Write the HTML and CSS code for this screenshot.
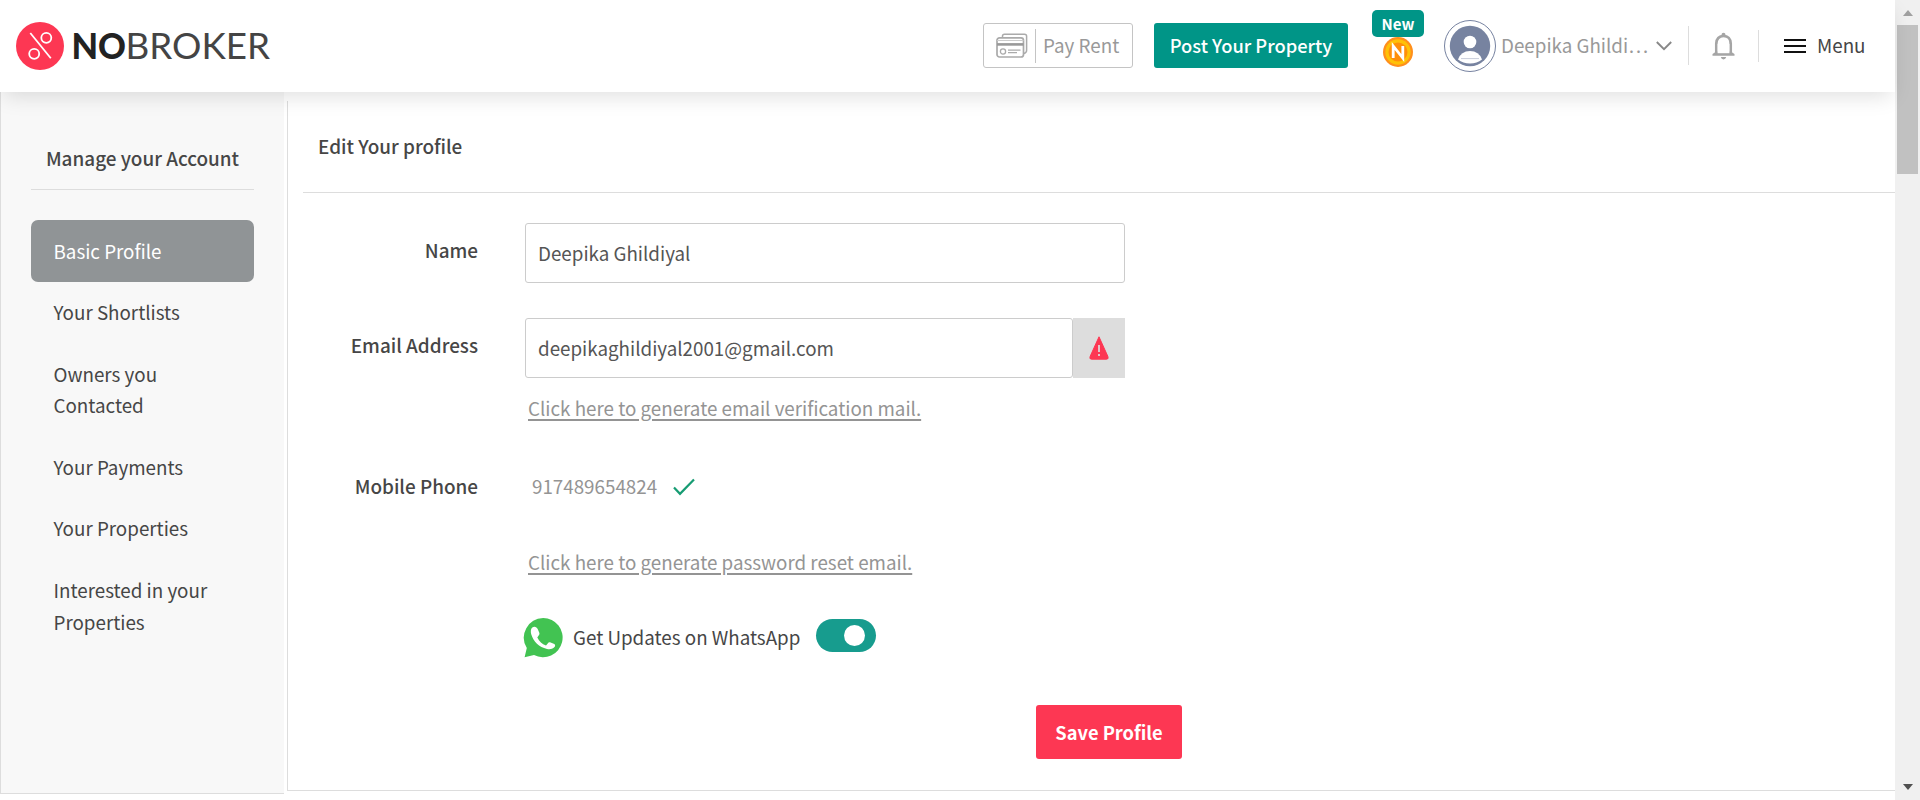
FILE: index.html
```html
<!DOCTYPE html>
<html lang="en">
<head>
<meta charset="utf-8">
<title>NoBroker - Edit Your profile</title>
<link rel="stylesheet" href="styles.css">
</head>
<body>
<div class="page">
  <div class="view">
    <header class="header">
      <a class="logo">
        <svg width="48" height="48" viewBox="0 0 48 48"><circle cx="24" cy="24" r="24" fill="#fd3753"/><g fill="none" stroke="#fff" stroke-width="1.8"><path d="M14.3 11 34.8 36.3"/><circle cx="30.3" cy="15.8" r="5"/><circle cx="18.2" cy="31.8" r="5"/></g></svg>
        <svg class="wordmark" width="200" height="48" viewBox="0 0 200 48"><text class="word-no" x="-.5" y="37.2" textLength="54.5" lengthAdjust="spacingAndGlyphs">NO</text><text class="word-broker" x="53.5" y="37.2" textLength="144.5" lengthAdjust="spacingAndGlyphs">BROKER</text></svg>
      </a>
      <div class="nav">
        <a class="pay">
          <svg width="32" height="26" viewBox="0 0 32 26" fill="none"><path d="M6.5 4V3Q6.500 1.200 8.500 1.200H28.500Q30.600 1.200 30.600 3.200V17.500Q30.600 19.800 27.800 20.500" stroke="#aaa" stroke-width="1.5"/><rect x="1" y="4.8" width="26.5" height="19.2" rx="2.5" stroke="#aaa" stroke-width="1.7"/><path d="M1 7.5h26.5" stroke="#ccc"/><path d="M1 11.4h26.5" stroke="#999" stroke-width="2.6"/><circle cx="7" cy="18.5" r="2.6" stroke="#aaa" stroke-width="1.3"/><path d="M12 17.2h12.5M12 19.7h9" stroke="#aaa" stroke-width="1.2"/></svg>
          <span class="pay-text">Pay Rent</span>
        </a>
        <a class="post">Post Your Property</a>
        <div class="new">
          <span class="new-tag">New</span>
          <svg width="30" height="30" viewBox="0 0 30 30"><circle cx="15" cy="15" r="15" fill="#ff8f1c"/><circle cx="15" cy="15" r="12.7" fill="#ffc107"/><circle cx="15" cy="15" r="9.5" fill="#ff8f0a"/><path d="M10.2 21V9L19.8 21V9" fill="none" stroke="#fff" stroke-width="2.8"/></svg>
        </div>
        <div class="user">
          <svg width="52" height="52" viewBox="0 0 52 52"><circle cx="26" cy="26" r="25.5" fill="#fff" stroke="#7682a0"/><circle cx="26" cy="26" r="20.2" fill="#7783a0"/><circle cx="26" cy="22" r="6.3" fill="#fff"/><path d="M14 39.5Q17 31 26 31T38 39.5Q33 43.600 26 43.600T14 39.500Z" fill="#fff"/><path d="M17 38.6h18" stroke="#c9cedb" stroke-width="1"/></svg>
          <span class="user-name">Deepika Ghildi…</span>
          <svg width="16" height="10" viewBox="0 0 16 10"><path d="M.8 1 8 8.2 15.2 1" fill="none" stroke="#888" stroke-width="1.9"/></svg>
        </div>
        <div class="bell">
          <svg width="24" height="28" viewBox="0 0 24 28"><path d="M4.3 21V11.5C4.3 6.8 7.2 4 11.500 4S18.700 6.800 18.700 11.500V21" fill="none" stroke="#a5a5a5" stroke-width="2.7"/><path d="M9.500 4V2.800a2 2 0 0 1 4 0V4ZM.500 23.800V22L4.300 19.500H18.700L22.500 22V23.800ZM8.800 25h5.400q-.5 2.400-2.700 2.400T8.800 25Z" fill="#a5a5a5"/><rect x="5.600" y="12" width="11.800" height="9.200" fill="#fff"/></svg>
        </div>
        <div class="menu"><span class="burger"></span><span class="menu-text">Menu</span></div>
      </div>
    </header>
    <main class="body">
      <aside class="sidebar">
        <h2 class="side-title">Manage your Account</h2>
        <nav class="side-nav">
          <a class="item active">Basic Profile</a>
          <a class="item">Your Shortlists</a>
          <a class="item">Owners you Contacted</a>
          <a class="item">Your Payments</a>
          <a class="item">Your Properties</a>
          <a class="item">Interested in your Properties</a>
        </nav>
      </aside>
      <section class="content">
        <h1 class="title">Edit Your profile</h1>
        <form class="form">
          <div class="row name-row"><span class="label">Name</span><div class="field">Deepika Ghildiyal</div></div>
          <div class="row email-row"><span class="label">Email Address</span><div class="field email">deepikaghildiyal2001@gmail.com</div><span class="warn"><svg width="20" height="24" viewBox="0 0 20 24"><path d="M10 .8 18.8 20.3Q20 23.2 17.5 23.2H2.5Q0 23.2 1.2 20.3Z" fill="#fd3753" stroke="#fd3753" stroke-linejoin="round"/><path d="M10 9v7M10 18v2" stroke="#ddd" stroke-width="1.7"/></svg></span></div>
          <a class="link">Click here to generate email verification mail.</a>
          <div class="row phone-row"><span class="label">Mobile Phone</span><span class="phone">917489654824</span><svg width="22" height="18" viewBox="0 0 22 18"><path d="M1 9.5 7 15.8 21 1.5" fill="none" stroke="#179c73" stroke-width="2.2"/></svg></div>
          <a class="link reset">Click here to generate password reset email.</a>
          <div class="whatsapp">
            <svg width="40" height="40" viewBox="0 0 40 40"><path d="M20.2 0A19.6 19.6 0 1 1 11 37L1.6 39.3 3.8 30A19.7 19.7 0 0 1 20.2 0Z" fill="#42c352"/><path d="M9.300 9.400C11.500 8 13.800 8.900 14.800 11.200L16.400 15C17 16.600 15 18 14.300 19.500C16.300 23.500 19 26 23 27.400C24.500 26.300 25.200 23.800 27 24.300L31.300 25.900C32.600 26.500 32.300 28.400 31 29.600C29.200 31.300 26.500 31.600 24 31C16 29 10.500 23.500 8.300 16.500C7.500 13.800 7.600 10.800 9.300 9.400Z" fill="#fff"/></svg>
            <span class="wa-text">Get Updates on WhatsApp</span>
            <span class="toggle"><span class="knob"></span></span>
          </div>
          <button type="button" class="save">Save Profile</button>
        </form>
      </section>
    </main>
  </div>
  <div class="scrollbar"><span class="up"></span><span class="thumb"></span><span class="down"></span></div>
</div>
</body>
</html>
```
FILE: styles.css
```css
* { box-sizing: border-box; }
body { margin: 0; background: #fff; color: #464646; font-family: "Noto Sans CJK SC", "Noto Sans", sans-serif; font-size: 18.8px; line-height: 32px; }
svg { display: block; flex: none; }
.page { display: flex; width: 1920px; height: 800px; overflow: hidden; }
.view { width: 1895px; }
.header { position: relative; height: 92px; display: flex; justify-content: space-between; padding-left: 16px; background: #fff; box-shadow: 0 8px 20px -4px rgba(0, 0, 0, .13); white-space: nowrap; }
.logo { display: flex; gap: 8px; padding-top: 22px; }
.wordmark { font-family: Lato, sans-serif; font-size: 36px; }
.word-no { font-weight: 900; fill: #222; }
.word-broker { font-weight: 400; fill: #444; }
.nav { display: flex; align-items: flex-start; width: 912px; }
.pay { display: flex; align-items: center; width: 150px; height: 45px; margin-top: 23px; padding-left: 12px; border: 1px solid #c4c4c4; border-radius: 3px; color: #999; }
.pay-text { margin-left: 7px; padding-left: 7px; border-left: 1px solid #c4c4c4; height: 34px; line-height: 31px; }
.post { width: 194px; height: 45px; margin: 23px 0 0 21px; border-radius: 3px; background: #009587; color: #fff; font-size: 18.3px; font-weight: 500; text-align: center; line-height: 45px; }
.new { display: flex; flex-direction: column; align-items: center; width: 52px; margin: 10px 0 0 24px; }
.new-tag { width: 52px; height: 27px; border-radius: 5px; background: #009587; color: #fff; font-size: 15px; font-weight: 700; line-height: 27px; text-align: center; }
.user { display: flex; align-items: center; width: 244px; height: 52px; margin: 20px 0 0 20px; color: #999; }
.user-name { width: 149px; margin: 0 6px 0 5px; padding-bottom: 2px; }
.bell { width: 70px; height: 39px; margin-top: 26px; padding: 6px 0 0 23px; border-left: 1px solid #ddd; }
.menu { display: flex; align-items: center; height: 32px; margin-top: 30px; padding-left: 25px; border-left: 1px solid #ddd; gap: 11px; }
.menu-text { padding-bottom: 2px; }
.burger { width: 22px; height: 14px; border-top: 2px solid #111; border-bottom: 2px solid #111; background: linear-gradient(#111, #111) 0 4px / 22px 2px no-repeat; }
.body { display: flex; gap: 3px; }
.sidebar { width: 284px; height: 702px; padding: 50px 30px 0 30px; border: solid #ddd; border-width: 0 0 1px 1px; background: #f8f8f8; }
.side-title { margin: 0 -4px 30px 0; height: 48px; background: linear-gradient(#ddd, #ddd) 0 100% / 223px 1px no-repeat; font-size: 18.9px; font-weight: 500; text-align: center; padding-right: 4px; }
.side-nav { display: flex; flex-direction: column; }
.item { padding: 14.5px 24px 15.500px 22.500px; line-height: 31.6px; }
.active { border-radius: 7px; background: #909496; color: #fff; }
.content { flex: 1; height: 690px; margin-top: 9px; padding-left: 15px; border: solid #ddd; border-width: 0 0 1px 1px; }
.title { height: 92px; margin: 0; padding: 29px 0 0 15px; border-bottom: 1px solid #ddd; font-size: 18.9px; font-weight: 500; }
.form { display: flex; flex-direction: column; padding-top: 30px; }
.row { display: flex; }
.label { width: 175px; margin-right: 47px; padding-top: 11px; text-align: right; font-size: 18.9px; font-weight: 500; }
.field { width: 600px; height: 60px; padding-left: 12px; border: 1px solid #ccc; border-radius: 3px; line-height: 58px; color: #555; }
.email-row { margin-top: 35px; }
.email { width: 548px; line-height: 57px; }
.warn { display: flex; align-items: center; justify-content: center; width: 52px; height: 60px; background: #ddd; }
.link { align-self: flex-start; margin: 14px 0 0 225px; color: #949494; text-decoration: underline; text-decoration-thickness: 2px; text-underline-offset: 3px; }
.phone-row { margin-top: 35px; align-items: center; }
.phone-row .label { padding: 11px 0 13px; }
.phone { margin-left: 7px; width: 127px; padding-bottom: 2px; color: #949494; }
.phone-row svg { margin-left: 14px; }
.reset { margin-top: 31px; }
.whatsapp { display: flex; margin: 40px 0 0 220px; height: 40px; }
.wa-text { width: 229px; margin: 3px 0 0 10px; white-space: nowrap; }
.toggle { width: 60px; height: 33px; margin: 1px 0 0 14px; padding: 6px 0 0 28px; border-radius: 17px; background: #179c8e; }
.knob { display: block; width: 21px; height: 21px; border-radius: 50%; background: #fff; }
.save { width: 146px; height: 54px; margin: 47px 0 0 733px; padding: 0; border: 0; border-radius: 3px; background: #fd3753; color: #fff; font: 700 18.3px/53px "Noto Sans CJK SC", sans-serif; }
.scrollbar { width: 25px; height: 800px; padding: 10px 2px 0; background: #f0f0f0; display: flex; flex-direction: column; align-items: center; }
.up { border: solid transparent; border-width: 0 5.5px 6px; border-bottom-color: #a0a0a0; }
.thumb { width: 21px; height: 149px; margin-top: 9px; background: #c1c1c1; }
.down { border: solid transparent; border-width: 6px 5.5px 0; border-top-color: #505050; margin-top: 610px; }
```
